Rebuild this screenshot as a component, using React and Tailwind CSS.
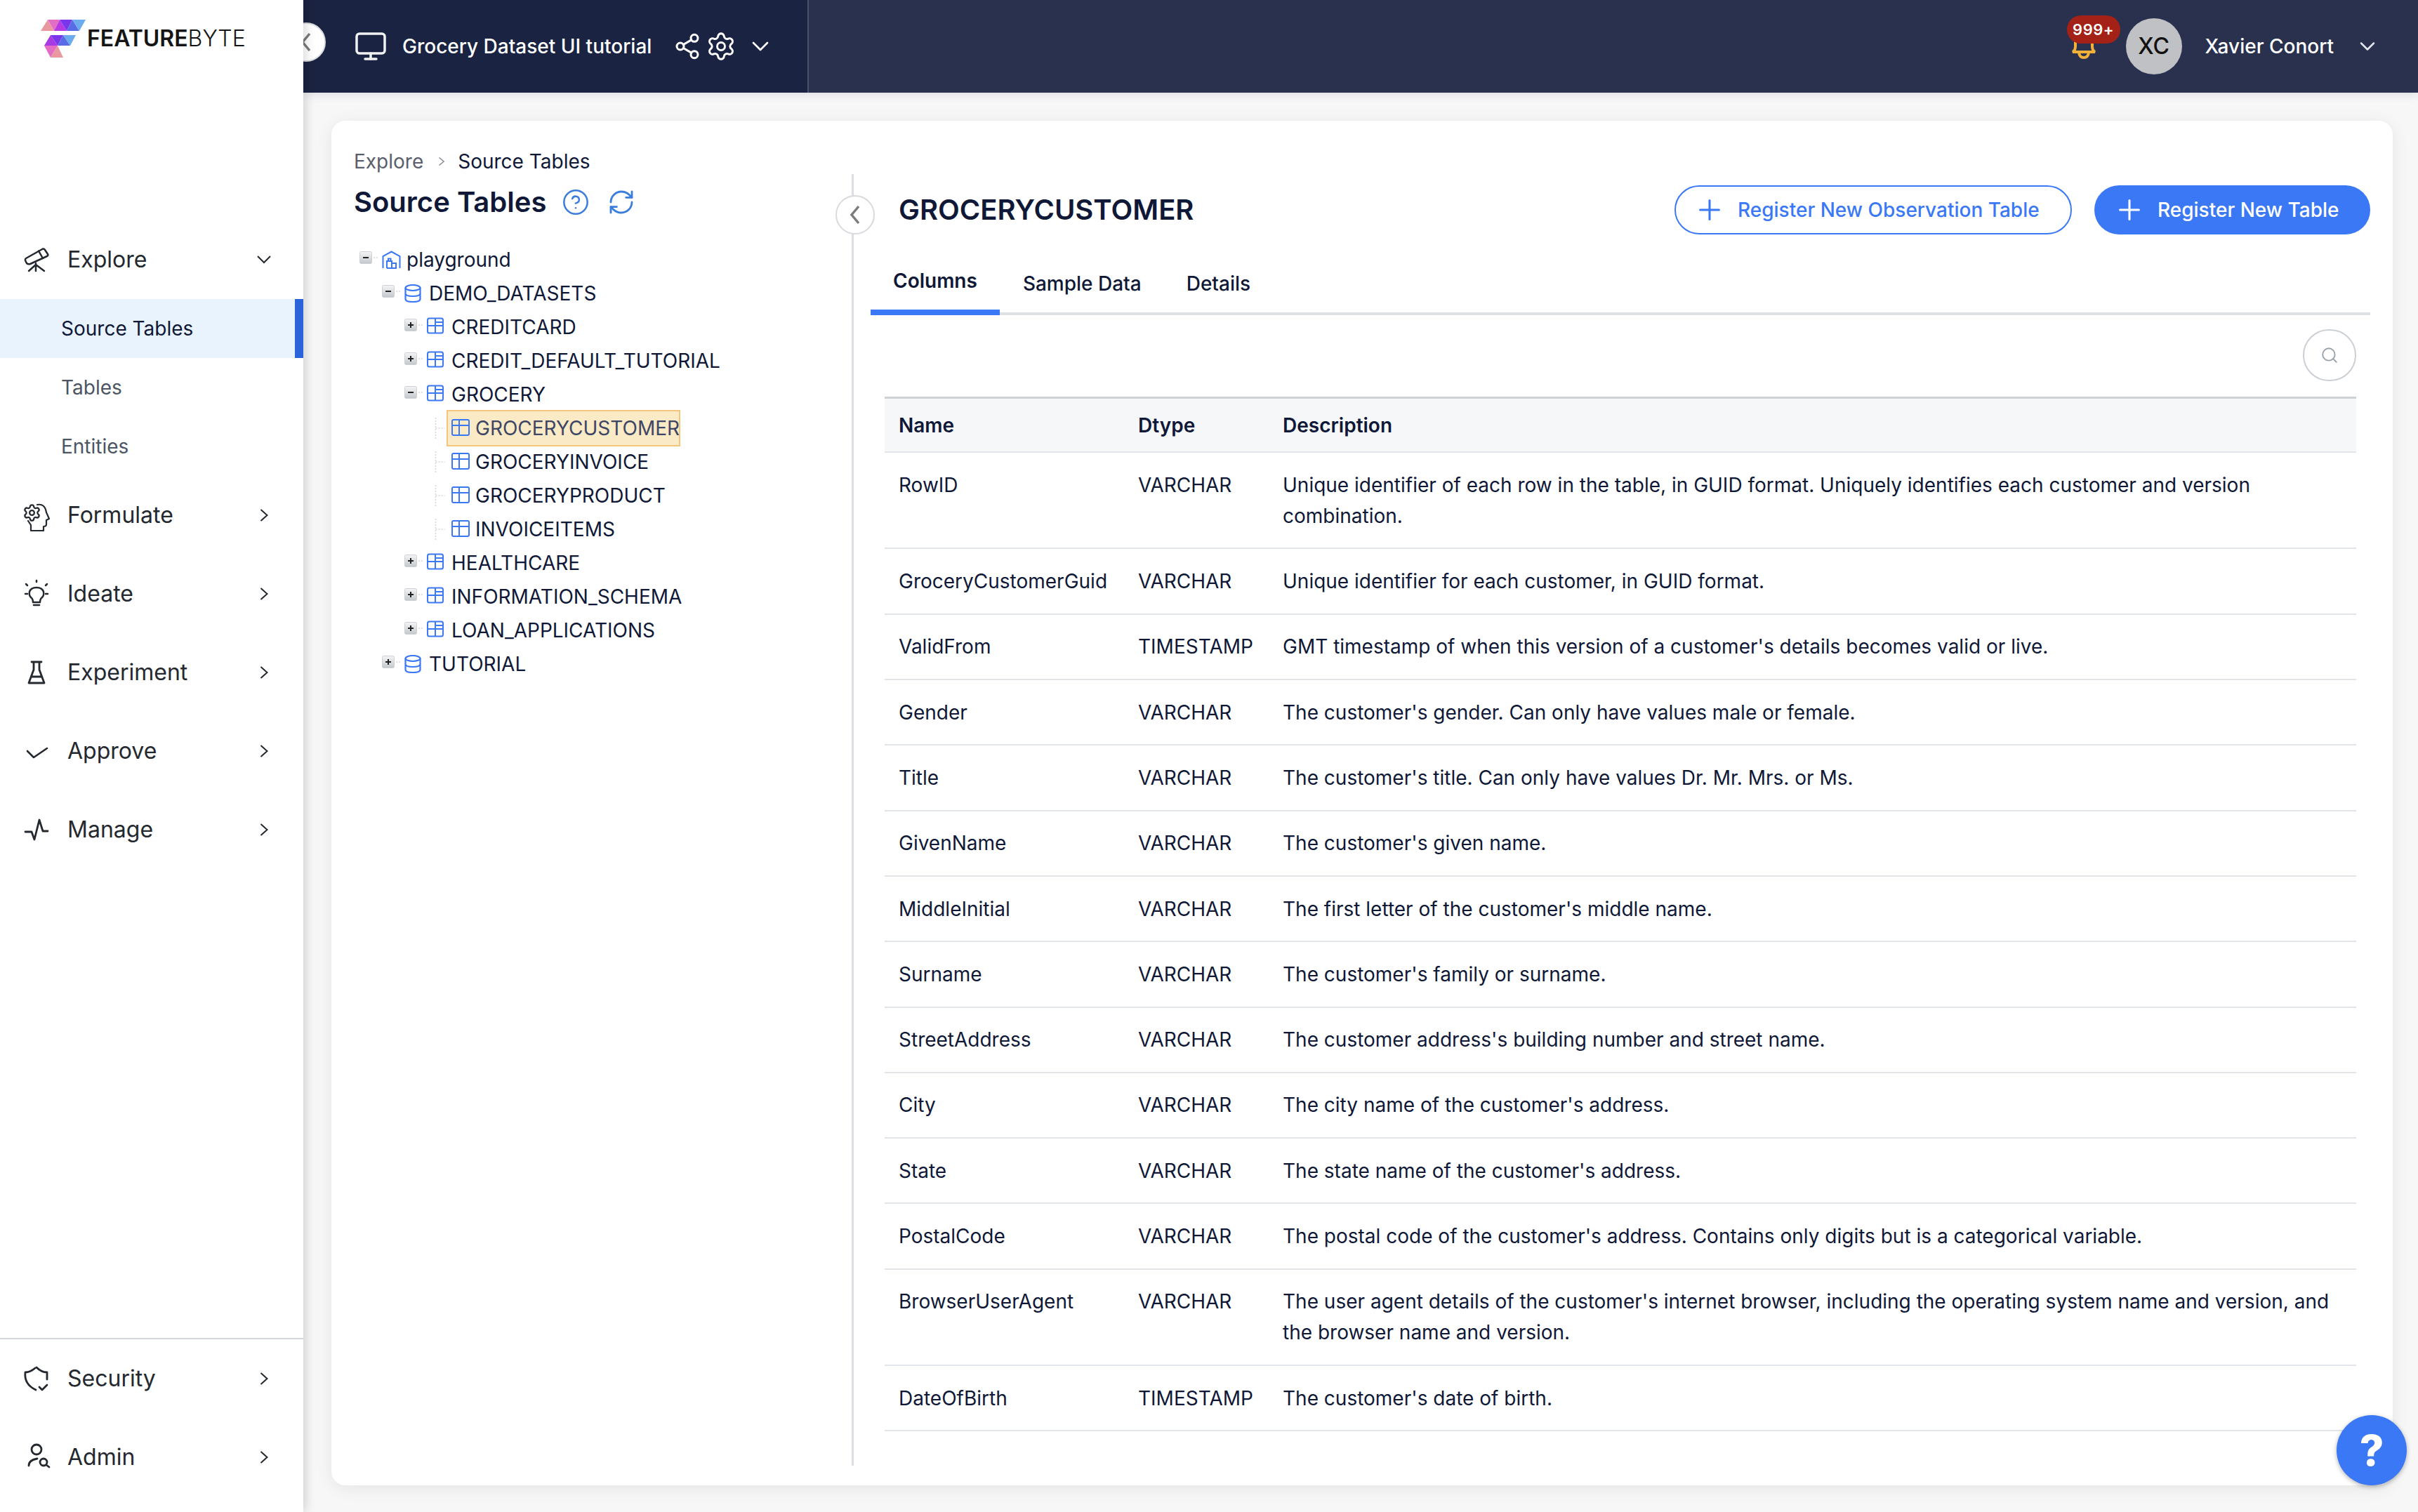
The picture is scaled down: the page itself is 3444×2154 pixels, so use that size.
import React from "react";
import { Monitor, Share2, Settings, ChevronDown, ChevronRight, CircleHelp, RefreshCw, Plus, Search } from "lucide-react";

const S = { fill: "none", stroke: "#24282f", strokeWidth: 2.5, strokeLinecap: "round", strokeLinejoin: "round" };

const Telescope = () => (
  <g {...S}>
    <path d="M17 28 L41 14.5 Q43 14 44 16 L48 22 Q49 24 47 25 L23 36 Q20 37 18 35 L16 31 Q15.5 29 17 28 Z" />
    <path d="M35 17.5 L41 28" />
    <path d="M31 35 V46 M31 37 L21 46 M31 37 L43 46" />
  </g>
);
const Head = () => (
  <g {...S} strokeWidth="2.2">
    <path d="M33 15 Q44 13 46 26 L50 35 L46 37 V43 Q46 46 42 46 V52 H24 V44 Q22 41 20 38" />
    <Settings x="12" y="13" width="27" height="27" stroke="#24282f" strokeWidth="2" />
  </g>
);
const Bulb = () => (
  <g {...S}>
    <path d="M27 42 Q27 37 24 35 Q21 32 22 27 Q24 21 32 21 Q40 21 42 27 Q43 32 40 35 Q37 37 37 42 Z" />
    <path d="M28 46 H36 M32 11 V13 M17 16 L19 18 M47 16 L45 18 M16 30 H19 M45 30 H48" />
  </g>
);
const Flask = () => (
  <g {...S} strokeWidth="2.8">
    <path d="M25 15 H39 M28 15 V26 L21 45 H43 L36 26 V15 M24.5 36 H39.5" />
  </g>
);
const Tick = () => <polyline {...S} strokeWidth="2.6" points="19,30 28,39 47,26" />;
const Pulse = () => <polyline {...S} strokeWidth="2.8" points="16,33 25,33 29,44 36,16 41,32 48,32" />;
const Shield = () => (
  <g {...S} strokeWidth="2.8">
    <path d="M30 15 Q23 21 16 21 Q14 38 31 46 M32 14 Q39 21 47 21 V31" />
    <path d="M36 42 L40 46 L47 39" />
  </g>
);
const Admin = () => (
  <g {...S} strokeWidth="2.8">
    <circle cx="32" cy="19" r="7" />
    <path d="M21 42 Q21 34 33 32" />
    <circle cx="42" cy="37" r="5" />
    <path d="M46 41 L50 44" />
  </g>
);

function NavIcon({ children }) {
  return <svg viewBox="0 0 60 60" className="w-[60px] h-[60px] shrink-0">{children}</svg>;
}

function Nav({ icon, label, open }) {
  return (
    <div className="flex items-center h-[112px] pl-[20px] text-[32px] text-[#24282f]">
      <NavIcon>{icon}</NavIcon>
      <span className="ml-[16px] flex-1">{label}</span>
      {open ? (
        <svg viewBox="0 0 20 12" className="w-[20px] h-[12px] mr-[46px]"><polyline points="1,1 10,10 19,1" fill="none" stroke="#24282f" strokeWidth="2" /></svg>
      ) : (
        <svg viewBox="0 0 12 18" className="w-[12px] h-[18px] mr-[50px]"><polyline points="1.5,1 10.5,9 1.5,17" fill="none" stroke="#24282f" strokeWidth="2" /></svg>
      )}
    </div>
  );
}

const BLUE = "#3b78f6";

function Expander({ open }) {
  return (
    <svg viewBox="0 0 32 18" className="w-[32px] h-[18px] shrink-0 mb-[6px]">
      <defs>
        <linearGradient id="exp" x1="0" y1="0" x2="0" y2="1">
          <stop offset="0" stopColor="#f4f5f6" />
          <stop offset="1" stopColor="#c4c7cb" />
        </linearGradient>
      </defs>
      <rect x="0.5" y="0.5" width="17" height="17" rx="2" fill="url(#exp)" stroke="#cdd1d6" />
      <path d={open ? "M5 9 H13" : "M5 9 H13 M9 5 V13"} stroke="#222" strokeWidth="2" />
      <path d="M20 9 H26" stroke="#d4d6d9" strokeWidth="1.5" strokeDasharray="2 2" />
    </svg>
  );
}

const TableIconA = () => (
  <svg viewBox="0 0 24 24" className="w-[24px] h-[24px] shrink-0 mb-[4px]" fill="none" stroke={BLUE} strokeWidth="2">
    <rect x="1" y="1.5" width="22" height="21" rx="2.5" />
    <path d="M12 1.5 V22.5 M1 12 H23 M12 7 H23" />
  </svg>
);
const TableIconB = () => (
  <svg viewBox="0 0 26 24" className="w-[26px] h-[24px] shrink-0 mb-[2px]" fill="none" stroke={BLUE} strokeWidth="2">
    <rect x="1" y="1" width="24" height="22" rx="2" />
    <path d="M11 1 V23 M1 9 H25" />
  </svg>
);
const Db = () => (
  <svg viewBox="0 0 24 26" className="w-[24px] h-[26px] shrink-0" fill="none" stroke={BLUE} strokeWidth="2.2">
    <ellipse cx="12" cy="5" rx="10.5" ry="4" />
    <path d="M1.5 5 V21 C1.5 23.5 6 25 12 25 S22.5 23.5 22.5 21 V5 M1.5 13 C1.5 15.5 6 17 12 17 S22.5 15.5 22.5 13" />
  </svg>
);
const Home = () => (
  <svg viewBox="0 0 27 26" className="w-[27px] h-[26px] shrink-0" fill="none" stroke={BLUE} strokeWidth="2">
    <path d="M1.5 25 V8 L13.5 1.5 L25.5 8 V25" />
    <path d="M7 25 V15 H14 V25 M14 25 H20 V18 H14 M7 25 H20" />
    <path d="M9 15 V11.5 H12.5 V15" />
  </svg>
);

function TreeRow({ level, open, icon, label }) {
  const pad = level === 0 ? "pl-[8px]" : level === 1 ? "pl-[40px]" : "pl-[72px]";
  return (
    <div className={`flex items-center h-[48px] ${pad}`}>
      <Expander open={open} />
      <span className="w-[35px] flex items-center shrink-0">{icon}</span>
      <span>{label}</span>
    </div>
  );
}

function Leaf({ label, active }) {
  return (
    <div className="flex items-center h-[48px] pl-[115px]">
      <svg viewBox="0 0 16 30" className="w-[17px] h-[30px] shrink-0">
        <path d="M1 0 V30 M1 15 H14" stroke="#d6d8db" strokeWidth="1.5" strokeDasharray="2 2" fill="none" />
      </svg>
      {active ? (
        <span className="flex items-center h-[52px] -my-[2px] w-[333px] shrink-0 box-border -ml-[0px] pl-[5px] bg-[#fbeac6] border-2 border-[#f4c67d] text-[#3d4664]">
          <TableIconB />
          <span className="ml-[8px] whitespace-nowrap">{label}</span>
        </span>
      ) : (
        <span className="flex items-center pl-[7px]">
          <TableIconB />
          <span className="ml-[8px] whitespace-nowrap">{label}</span>
        </span>
      )}
    </div>
  );
}

const rows = [
  ["RowID", "VARCHAR", "Unique identifier of each row in the table, in GUID format. Uniquely identifies each customer and version combination."],
  ["GroceryCustomerGuid", "VARCHAR", "Unique identifier for each customer, in GUID format."],
  ["ValidFrom", "TIMESTAMP", "GMT timestamp of when this version of a customer's details becomes valid or live."],
  ["Gender", "VARCHAR", "The customer's gender. Can only have values male or female."],
  ["Title", "VARCHAR", "The customer's title. Can only have values Dr. Mr. Mrs. or Ms."],
  ["GivenName", "VARCHAR", "The customer's given name."],
  ["MiddleInitial", "VARCHAR", "The first letter of the customer's middle name."],
  ["Surname", "VARCHAR", "The customer's family or surname."],
  ["StreetAddress", "VARCHAR", "The customer address's building number and street name."],
  ["City", "VARCHAR", "The city name of the customer's address."],
  ["State", "VARCHAR", "The state name of the customer's address."],
  ["PostalCode", "VARCHAR", "The postal code of the customer's address. Contains only digits but is a categorical variable."],
  ["BrowserUserAgent", "VARCHAR", "The user agent details of the customer's internet browser, including the operating system name and version, and the browser name and version."],
  ["DateOfBirth", "TIMESTAMP", "The customer's date of birth."],
];

function Circle({ className }) {
  return (
    <span className={`flex items-center justify-center w-[56px] h-[56px] rounded-full bg-white border-2 border-[#d8dadd] ${className}`}>
      <svg viewBox="0 0 16 28" className="w-[16px] h-[28px]"><polyline points="13,2 3,14 13,26" fill="none" stroke="#7c7c7c" strokeWidth="3.5" /></svg>
    </span>
  );
}

export default function App() {
  return (
    <div className="relative flex w-[3444px] h-[2154px] overflow-hidden bg-[#f7f7f8] font-[Inter,sans-serif] text-[28px] text-[#0f1836]">
      {/* sidebar */}
      <aside className="relative z-20 flex flex-col w-[432px] shrink-0 bg-white shadow-[3px_0_14px_rgba(0,0,0,0.16)]">
        <div className="h-[314px] shrink-0 pt-[26px] pl-[56px]">
          <div className="flex items-center">
            <svg viewBox="56 26 68 58" className="w-[68px] h-[58px] shrink-0">
              <polygon points="58,44 68,28 77,44" fill="#e8989e" />
              <polygon points="68,28 85,28 77,44" fill="#e36cc4" />
              <polygon points="77,44 85,28 95,44" fill="#b63ae2" />
              <polygon points="85,28 103,28 95,44" fill="#7a36ea" />
              <polygon points="95,44 103,28 113,44" fill="#5a6be6" />
              <polygon points="103,28 122,28 113,44" fill="#6cabed" />
              <polygon points="63,65 72,50 82,65" fill="#a83ae4" />
              <polygon points="72,50 90,50 82,65" fill="#7a36ea" />
              <polygon points="82,65 90,50 100,65" fill="#5a6be6" />
              <polygon points="90,50 108,50 100,65" fill="#6cabed" />
              <polygon points="63,65 82,65 72,82" fill="#e36cc4" />
              <polygon points="72,82 82,65 90,82" fill="#e8989e" />
            </svg>
            <span className="text-[32px] leading-none text-[#151515] whitespace-nowrap">
              <span className="font-semibold">FEATURE</span>
              <span className="font-light">BYTE</span>
            </span>
          </div>
        </div>
        <Nav icon={<Telescope />} label="Explore" open />
        <div className="relative flex items-center h-[84px] pl-[87px] bg-[#e8f3fd] text-[#0f1836]">
          Source Tables
          <span className="absolute right-0 top-0 bottom-0 w-[12px] bg-[#2a63da]" />
        </div>
        <div className="flex items-center h-[84px] pl-[87px] text-[#4b5563]">Tables</div>
        <div className="flex items-center h-[84px] pl-[87px] text-[#4b5563]">Entities</div>
        <Nav icon={<Head />} label="Formulate" />
        <Nav icon={<Bulb />} label="Ideate" />
        <Nav icon={<Flask />} label="Experiment" />
        <Nav icon={<Tick />} label="Approve" />
        <Nav icon={<Pulse />} label="Manage" />
        <div className="mt-auto border-t-2 border-[#d3d6da] pb-[22px]">
          <Nav icon={<Shield />} label="Security" />
          <Nav icon={<Admin />} label="Admin" />
        </div>
      </aside>

      {/* main */}
      <div className="flex-1 flex flex-col min-w-0">
        <header className="relative z-10 flex h-[132px] shrink-0 bg-[#2a314e] text-white shadow-[0_3px_12px_rgba(30,40,70,0.12)]">
          <Circle className="absolute -left-[24px] top-[32px] z-30" />
          <div className="flex items-center w-[720px] pl-[72px] bg-[#1b2342] border-r-2 border-[#4a5069]">
            <Monitor size={48} strokeWidth={1.75} color="#f1f1f3" />
            <span className="ml-[21px] font-medium whitespace-nowrap">Grocery Dataset UI tutorial</span>
            <Share2 size={40} strokeWidth={1.8} className="ml-[31px]" />
            <Settings size={44} strokeWidth={1.6} className="ml-[6px]" />
            <ChevronDown size={40} strokeWidth={1.6} className="ml-[14px]" />
          </div>
          <div className="flex-1 flex items-center justify-end pr-[54px]">
            <div className="relative w-[76px] h-[72px]">
              <svg viewBox="0 0 36 54" className="absolute left-[6px] top-0 w-[36px] h-[54px]" fill="none" stroke="#f0b03a" strokeWidth="4">
                <path d="M6 5 V36 Q6 42 2 44 H34 Q30 42 30 36 V5" />
                <path d="M11 45 Q12 52 18 52 Q24 52 25 45" />
              </svg>
              <span className="absolute left-0 -top-[8px] flex items-center justify-center w-[76px] h-[40px] rounded-full bg-[#a32116] text-white text-[22px] font-semibold tracking-[0.5px]">999+</span>
            </div>
            <span className="ml-[8px] flex items-center justify-center w-[80px] h-[80px] rounded-full bg-[#c0c1c4] text-[#111] text-[32px] font-medium">XC</span>
            <span className="ml-[33px] font-medium">Xavier Conort</span>
            <ChevronDown size={36} strokeWidth={1.7} color="#e4e5ea" className="ml-[30px]" />
          </div>
        </header>

        <div className="flex-1 min-h-0 pt-[40px] pl-[40px] pr-[36px] pb-[38px]">
          <div className="flex h-full rounded-[20px] bg-white shadow-[0_4px_24px_rgba(0,0,0,0.08)]">
            {/* left pane */}
            <div className="w-[741px] shrink-0 pl-[32px] pt-[38px]">
              <div className="flex items-center h-[40px]">
                <span className="text-[#5a5f6b]">Explore</span>
                <svg viewBox="0 0 10 14" className="ml-[21px] w-[10px] h-[14px]"><polyline points="1.5,1.5 8,7 1.5,12.5" fill="none" stroke="#8a8d93" strokeWidth="1.6" /></svg>
                <span className="ml-[18px]">Source Tables</span>
              </div>
              <div className="flex items-center h-[56px] mt-[10px]">
                <span className="text-[40px] font-semibold">Source Tables</span>
                <CircleHelp size={40} strokeWidth={1.5} color="#3b7ddd" className="ml-[22px]" />
                <RefreshCw size={40} strokeWidth={1.7} color="#3b7ddd" className="ml-[25px]" />
              </div>
              <div className="mt-[30px]">
                <TreeRow level={0} open icon={<Home />} label="playground" />
                <TreeRow level={1} open icon={<Db />} label="DEMO_DATASETS" />
                <TreeRow level={2} icon={<TableIconA />} label="CREDITCARD" />
                <TreeRow level={2} icon={<TableIconA />} label="CREDIT_DEFAULT_TUTORIAL" />
                <TreeRow level={2} open icon={<TableIconA />} label="GROCERY" />
                <Leaf label="GROCERYCUSTOMER" active />
                <Leaf label="GROCERYINVOICE" />
                <Leaf label="GROCERYPRODUCT" />
                <Leaf label="INVOICEITEMS" />
                <TreeRow level={2} icon={<TableIconA />} label="HEALTHCARE" />
                <TreeRow level={2} icon={<TableIconA />} label="INFORMATION_SCHEMA" />
                <TreeRow level={2} icon={<TableIconA />} label="LOAN_APPLICATIONS" />
                <TreeRow level={1} icon={<Db />} label="TUTORIAL" />
              </div>
            </div>

            {/* divider */}
            <div className="relative w-[3px] shrink-0 mt-[76px] mb-[28px] bg-[#dcdee1]">
              <Circle className="absolute -left-[23px] top-[30px]" />
            </div>

            {/* right pane */}
            <div className="flex-1 min-w-0 pt-[92px]">
              <div className="flex items-center h-[70px] pl-[64px] pr-[32px]">
                <h1 className="flex-1 text-[40px] font-semibold">GROCERYCUSTOMER</h1>
                <button className="flex items-center h-[70px] w-[566px] pl-[25px] rounded-full border-2 border-[#3b78f6] text-[#3b78f6] font-medium">
                  <Plus size={46} strokeWidth={1.6} />
                  <span className="ml-[17px]">Register New Observation Table</span>
                </button>
                <button className="ml-[32px] flex items-center h-[70px] w-[393px] pl-[27px] rounded-full bg-[#3b78f6] text-white font-medium">
                  <Plus size={46} strokeWidth={1.6} />
                  <span className="ml-[17px]">Register New Table</span>
                </button>
              </div>

              <div className="flex mt-[25px] ml-[24px] mr-[32px] border-b-4 border-[#dee2e6] font-medium">
                <div className="flex items-center h-[90px] -mb-[4px] px-[32px] border-b-8 border-[#3b78f6] font-semibold">Columns</div>
                <div className="flex items-center h-[90px] -mb-[4px] px-[32px] ml-[1px]">Sample Data</div>
                <div className="flex items-center h-[90px] -mb-[4px] px-[32px]">Details</div>
              </div>

              <div className="flex justify-end mt-[20px] mr-[52px]">
                <span className="flex items-center justify-center w-[76px] h-[74px] rounded-full border-2 border-[#ccd0d5]">
                  <Search size={26} strokeWidth={1.7} color="#9aa0a8" />
                </span>
              </div>

              <div className="mt-[22px] ml-[44px] mr-[52px] leading-[44px]">
                <div className="grid grid-cols-[341px_206px_1fr] items-center h-[80px] px-[20px] -mx-[0px] bg-[#f6f7f9] border-t-[3px] border-b-2 border-t-[#ced2d6] border-b-[#e2e6ea] font-semibold">
                  <span>Name</span>
                  <span>Dtype</span>
                  <span>Description</span>
                </div>
                {rows.map(([a, b, c]) => (
                  <div key={a} className="grid grid-cols-[341px_206px_1fr] pl-[20px] pr-[20px] py-[23.66px] border-b-2 border-[#e2e6ea]">
                    <span>{a}</span>
                    <span>{b}</span>
                    <span>{c}</span>
                  </div>
                ))}
              </div>
            </div>
          </div>
        </div>
      </div>

      {/* help */}
      <div className="absolute z-30 left-[3328px] top-[2016px] flex items-center justify-center w-[100px] h-[100px] rounded-full bg-[#3b78f6] text-white text-[60px] font-extrabold shadow-[0_2px_6px_rgba(0,0,0,0.3)]">?</div>
    </div>
  );
}
